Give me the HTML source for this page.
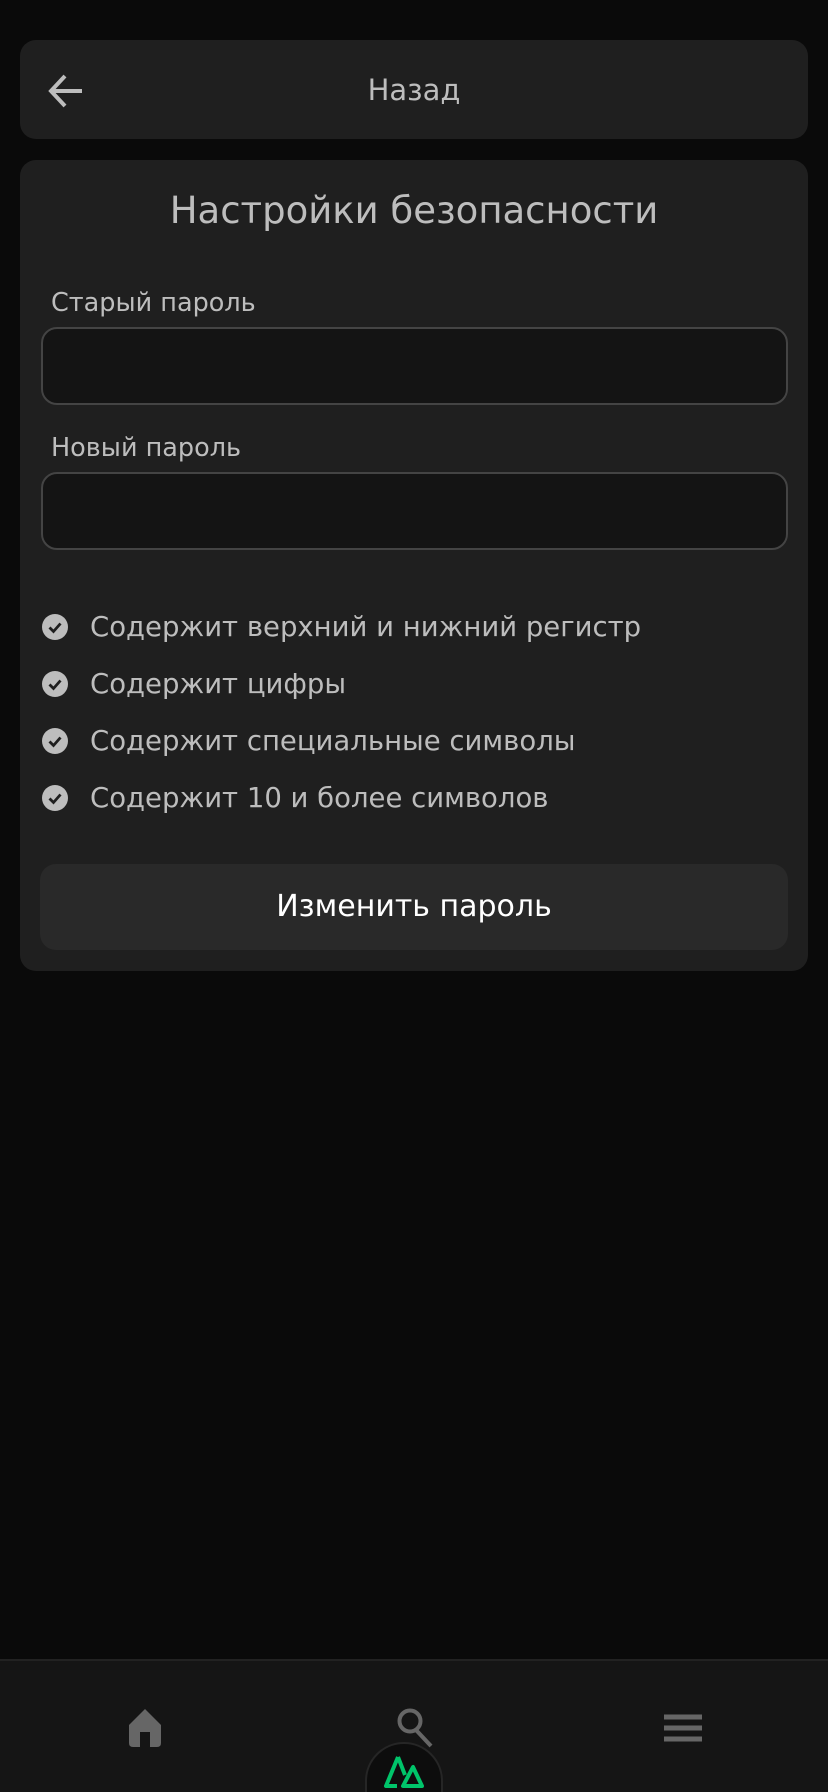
<!DOCTYPE html>
<html><head><meta charset="utf-8"><style>
*{margin:0;padding:0;box-sizing:border-box}
body{width:828px;height:1792px;background:#0a0a0a;font-family:"DejaVu Sans","Liberation Sans",sans-serif;position:relative;overflow:hidden;color:#bdbdbd}
.hdr{position:absolute;left:20px;top:40px;width:788px;height:99px;background:#1f1f1f;border-radius:16px}
.hdr span{position:absolute;left:0;right:0;top:32px;text-align:center;font-size:29px;line-height:36px;color:#bdbdbd}
.card{position:absolute;left:20px;top:160px;width:788px;height:811px;background:#1f1f1f;border-radius:16px}
.title{position:absolute;left:0;right:0;top:188px;text-align:center;font-size:37px;line-height:46px;color:#bdbdbd}
.lbl{position:absolute;left:51px;font-size:25.5px;line-height:30px;color:#bdbdbd}
.inp{position:absolute;left:41px;width:747px;height:78px;background:#141414;border:2px solid #444;border-radius:16px}
.chk{position:absolute;left:42px;font-size:27.5px;line-height:34px;color:#bdbdbd;display:flex;align-items:center}
.chk svg{margin-right:22px}
.btn{position:absolute;left:40px;top:864px;width:748px;height:86px;background:#292929;border-radius:16px;text-align:center;line-height:86px;font-size:30px;color:#fff}
.nav{position:absolute;left:0;top:1659px;width:828px;height:133px;background:#151515;border-top:2px solid #222;overflow:hidden}
</style></head><body>
<div class="hdr">
<svg style="position:absolute;left:26px;top:31px" width="40" height="40" viewBox="0 0 40 40"><path d="M36 20H6M19 5L5 20l14 15" fill="none" stroke="#bdbdbd" stroke-width="4"/></svg>
<span>Назад</span></div>
<div class="card"></div>
<div class="title">Настройки безопасности</div>
<div class="lbl" style="top:288px">Старый пароль</div>
<div class="inp" style="top:327px"></div>
<div class="lbl" style="top:433px">Новый пароль</div>
<div class="inp" style="top:472px"></div>
<div class="chk" style="top:610px"><svg width="26" height="26" viewBox="0 0 26 26"><circle cx="13" cy="13" r="13" fill="#bdbdbd"/><path d="M7.5 13.5l4 4 7-8" fill="none" stroke="#1f1f1f" stroke-width="2.8"/></svg>Содержит верхний и нижний регистр</div>
<div class="chk" style="top:667px"><svg width="26" height="26" viewBox="0 0 26 26"><circle cx="13" cy="13" r="13" fill="#bdbdbd"/><path d="M7.5 13.5l4 4 7-8" fill="none" stroke="#1f1f1f" stroke-width="2.8"/></svg>Содержит цифры</div>
<div class="chk" style="top:724px"><svg width="26" height="26" viewBox="0 0 26 26"><circle cx="13" cy="13" r="13" fill="#bdbdbd"/><path d="M7.5 13.5l4 4 7-8" fill="none" stroke="#1f1f1f" stroke-width="2.8"/></svg>Содержит специальные символы</div>
<div class="chk" style="top:781px"><svg width="26" height="26" viewBox="0 0 26 26"><circle cx="13" cy="13" r="13" fill="#bdbdbd"/><path d="M7.5 13.5l4 4 7-8" fill="none" stroke="#1f1f1f" stroke-width="2.8"/></svg>Содержит 10 и более символов</div>
<div class="btn">Изменить пароль</div>
<div class="nav">
<svg style="position:absolute;left:127px;top:48px" width="36" height="38" viewBox="0 0 36 38"><path d="M18 0L34 16V34Q34 38 30 38H23V23H13V38H6Q2 38 2 34V16Z" fill="#666"/></svg>
<div style="position:absolute;left:365px;top:81px;width:78px;height:100px;border-radius:39px;background:#0d0d0d;border:2px solid #262626"></div>
<svg style="position:absolute;left:396px;top:47px" width="40" height="40" viewBox="0 0 40 40"><circle cx="14" cy="13" r="10.5" fill="none" stroke="#666" stroke-width="4"/><path d="M20 22L35 38" stroke="#666" stroke-width="4"/></svg>
<svg style="position:absolute;left:664px;top:53px" width="38" height="28" viewBox="0 0 38 28"><path d="M0 3H38M0 14H38M0 25H38" stroke="#666" stroke-width="5"/></svg>
<svg style="position:absolute;left:383px;top:94px" width="42" height="34" viewBox="0 0 42 34"><path d="M15 2L3 31H14M15 2L22 20M20 31H39L30 12Z" fill="none" stroke="#00c46a" stroke-width="4" stroke-linejoin="round"/></svg>
</div>
</body></html>
